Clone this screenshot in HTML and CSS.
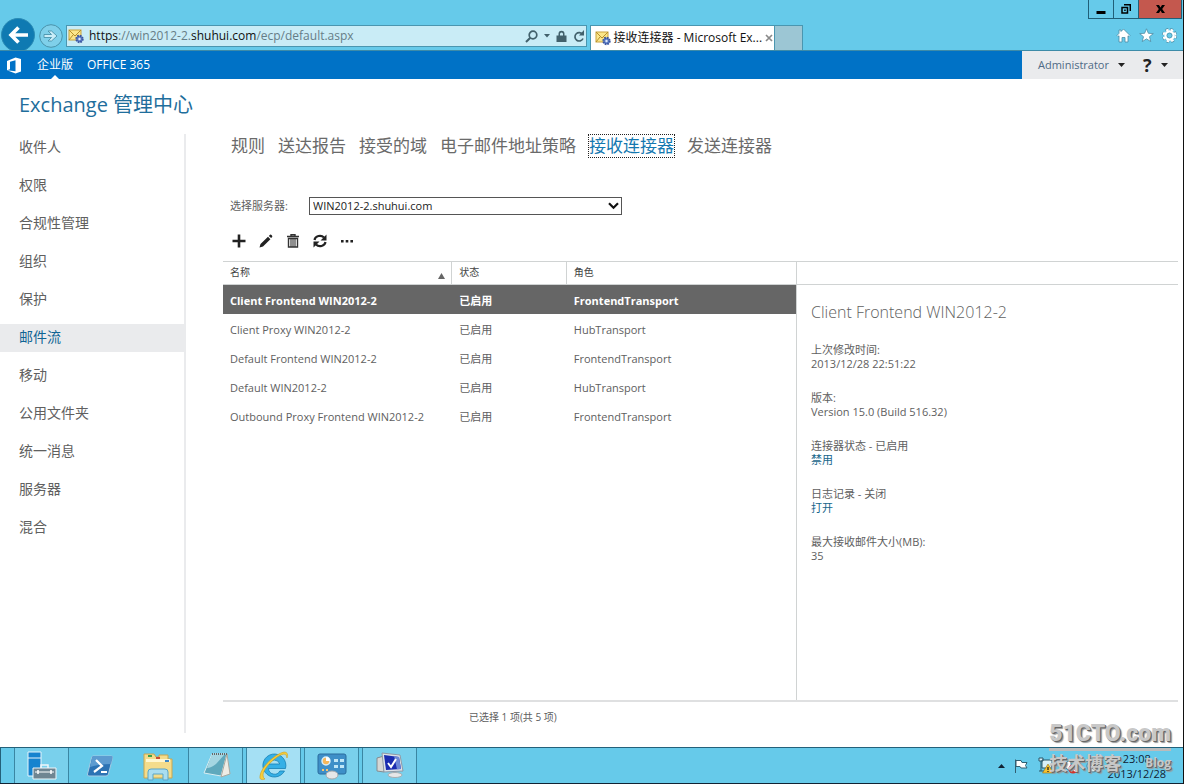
FILE: index.html
```html
<!DOCTYPE html>
<html lang="zh-CN">
<head>
<meta charset="utf-8">
<title>接收连接器 - Microsoft Exchange</title>
<link rel="stylesheet" href="styles.css">
</head>
<body>
<svg class="defs" width="0" height="0" aria-hidden="true">
  <defs>
    <symbol id="mail" viewBox="0 0 16 16">
      <rect x="1" y="2" width="12" height="10" fill="#fbe68a" stroke="#c9a23c"/>
      <path d="M1 2l6 6 6-6M1 12l4-5M13 12l-4-5" fill="none" stroke="#b88f2c"/>
      <circle cx="11.500" cy="11" r="3.200" fill="#5c7fc8" stroke="#3b559f" stroke-width="2" stroke-dasharray="1.600 .9"/>
      <circle cx="11.500" cy="11" r="1.200" fill="#dfe8fa"/>
    </symbol>
  </defs>
</svg>
<header class="chrome">
  <button class="back" aria-label="后退"><svg width="34" height="34" viewBox="0 0 34 34"><circle cx="17" cy="17" r="16.500" fill="#0f7ab2" stroke="#2b8bb5"/><path d="M27 17H10M17.500 9.500L10 17l7.500 7.500" fill="none" stroke="#fff" stroke-width="3.600"/></svg></button>
  <button class="forward" aria-label="前进"><svg width="24" height="24" viewBox="0 0 24 24"><circle cx="12" cy="12" r="11.300" fill="#7fd0ea" stroke="#4a93ab"/><path d="M5 10.500h7.500L9 7h3.500l5.500 5-5.500 5H9l3.500-3.500H5z" fill="#c9edf8" stroke="#4a93ab" stroke-width=".9"/></svg></button>
  <div class="address">
    <svg width="16" height="16"><use href="#mail"/></svg>
    <span class="url"><b>https</b>://win2012-2.<b>shuhui.com</b>/ecp/default.aspx</span>
    <button aria-label="搜索"><svg width="13" height="13" viewBox="0 0 13 13"><circle cx="8" cy="5" r="3.800" fill="none" stroke="#42616c" stroke-width="1.700"/><path d="M5.300 7.700L1 12" stroke="#42616c" stroke-width="2"/></svg></button>
    <button aria-label="下拉"><svg width="6" height="4" viewBox="0 0 6 4"><path d="M0 0h6L3 3.500z" fill="#42616c"/></svg></button>
    <button aria-label="安全"><svg width="11" height="13" viewBox="0 0 11 13"><path d="M.5 5.500h10V12H.5zM2.500 6V3.800a3 3 0 016 0V6" fill="#42616c"/><path d="M4 5.500V4a1.500 1.500 0 013 0v1.500z" fill="#c9ecf6"/></svg></button>
    <button aria-label="刷新"><svg width="12" height="13" viewBox="0 0 12 13"><path d="M9.700 4.500A4.200 4.200 0 1010 8.500" fill="none" stroke="#42616c" stroke-width="1.700"/><path d="M11 0v5.500H6z" fill="#42616c"/></svg></button>
  </div>
  <div class="browser-tab">
    <svg width="16" height="16"><use href="#mail"/></svg>
    <span>接收连接器 - Microsoft Ex...</span>
    <button aria-label="关闭标签"><svg width="8" height="8" viewBox="0 0 8 8"><path d="M1 1l6 6M7 1L1 7" stroke="#8a8a8a" stroke-width="1.700"/></svg></button>
  </div>
  <button class="new-tab" aria-label="新标签"></button>
  <div class="window-side">
    <div class="window-buttons">
      <button aria-label="最小化"><svg width="10" height="9" viewBox="0 0 10 9"><path d="M.5 6h9v3h-9z"/></svg></button>
      <button aria-label="还原"><svg width="10" height="10" viewBox="0 0 10 10"><path d="M1 3.500h5.500V9H1zM3 .7h6.300V7" fill="none" stroke="#000" stroke-width="1.500"/><path d="M3.200 5.500h1.500v1.500H3.200z"/></svg></button>
      <button class="close" aria-label="关闭"><svg width="9" height="8" viewBox="0 0 9 8"><path d="M0 0h3l1.500 2.400L6 0h3L6.200 4 9 8H6L4.500 5.600 3 8H0l2.800-4z"/></svg></button>
    </div>
    <div class="browser-tools">
      <button aria-label="主页"><svg width="15" height="15" viewBox="0 0 15 15"><path d="M7.500 1L14 7.500l-1 1-1-.7V14H9V9.500H6V14H3V7.800l-1 .7-1-1L3 5.300V2h2v1.500z" fill="#fff" stroke="#4c8ca3" stroke-width=".8"/></svg></button>
      <button aria-label="收藏夹"><svg width="15" height="15" viewBox="0 0 15 15"><path d="M7.500.8l1.900 4.500 4.900.3-3.800 3.100 1.300 4.900-4.300-2.700-4.300 2.700 1.300-4.900L.7 5.600l4.900-.3z" fill="#fff" stroke="#4c8ca3" stroke-width=".8"/></svg></button>
      <button aria-label="工具"><svg width="15" height="15" viewBox="0 0 15 15"><circle cx="7.500" cy="7.500" r="6" fill="none" stroke="#4c8ca3" stroke-width="3" stroke-dasharray="2.900 1.810"/><circle cx="7.500" cy="7.500" r="5.900" fill="none" stroke="#fff" stroke-width="2" stroke-dasharray="2.600 2.110"/><circle cx="7.500" cy="7.500" r="4" fill="none" stroke="#fff" stroke-width="2.400"/><circle cx="7.500" cy="7.500" r="2.500" fill="none" stroke="#4c8ca3" stroke-width=".7"/></svg></button>
    </div>
  </div>
</header>

<nav class="suite-bar">
  <svg class="office" width="17" height="17" viewBox="0 0 17 17"><path d="M1 4l8.500-3.500L15 2v12.500L9.500 16.500 1 13.300l8.500 1V3.300L4 4.700v7.500L1 13.300z" fill="#fff"/></svg>
  <a class="suite-link current" href="#">企业版</a>
  <a class="suite-link" href="#">OFFICE 365</a>
  <div class="account">
    <button class="user">Administrator <svg width="7" height="4" viewBox="0 0 7 4"><path d="M0 0h7L3.500 4z" fill="#222"/></svg></button>
    <button class="help"><span>?</span> <svg width="7" height="4" viewBox="0 0 7 4"><path d="M0 0h7L3.500 4z" fill="#222"/></svg></button>
  </div>
</nav>

<main class="page">
  <h1>Exchange 管理中心</h1>
  <div class="columns">
    <nav class="side">
      <a href="#">收件人</a><a href="#">权限</a><a href="#">合规性管理</a><a href="#">组织</a><a href="#">保护</a><a class="selected" href="#">邮件流</a><a href="#">移动</a><a href="#">公用文件夹</a><a href="#">统一消息</a><a href="#">服务器</a><a href="#">混合</a>
    </nav>
    <section class="content">
      <nav class="tabs">
        <a href="#">规则</a><a href="#">送达报告</a><a href="#">接受的域</a><a href="#">电子邮件地址策略</a><a class="active" href="#">接收连接器</a><a href="#">发送连接器</a>
      </nav>
      <div class="server">
        <label for="server">选择服务器:</label>
        <div class="select">
          <select id="server"><option>WIN2012-2.shuhui.com</option></select>
          <svg width="11" height="8" viewBox="0 0 11 8"><path d="M1 1.200l4.500 4.500L10 1.200" fill="none" stroke="#111" stroke-width="2.200"/></svg>
        </div>
      </div>
      <div class="toolbar">
        <button aria-label="新建"><svg width="16" height="16" viewBox="0 0 16 16"><path d="M8 1.500v13M1.500 8h13" stroke="#222" stroke-width="2.600"/></svg></button>
        <button aria-label="编辑"><svg width="16" height="16" viewBox="0 0 16 16"><path d="M1.500 14.500l1-3.500 7.500-7.200 2.400 2.500-7.400 7.200zM10.800 3l1.200-1.200q.8-.5 1.500.2l.6.7q.5.700 0 1.400l-1 1z" fill="#222"/></svg></button>
        <button aria-label="删除"><svg width="16" height="16" viewBox="0 0 16 16"><path d="M2 3.500h12M6 3V1.700h4V3M3.500 5.500h9V14h-9z" fill="none" stroke="#333" stroke-width="1.400"/><path d="M6 6v8M8 6v8M10 6v8" stroke="#333" stroke-width="1.100"/></svg></button>
        <button aria-label="刷新列表"><svg width="16" height="16" viewBox="0 0 16 16"><path d="M2.500 7A5.500 5 0 0112 4.500M13.500 9A5.500 5 0 014 11.500" fill="none" stroke="#222" stroke-width="2.200"/><path d="M14.500 1.500v6h-6zM1.500 14.500v-6h6z" fill="#222"/></svg></button>
        <button aria-label="更多"><svg width="16" height="16" viewBox="0 0 16 16"><path d="M2 7h2.600v2.400H2zM6.700 7h2.600v2.400H6.700zM11.400 7H14v2.400h-2.600z" fill="#222"/></svg></button>
      </div>
      <div class="panes">
        <div class="list">
          <table>
            <colgroup><col class="c-name"><col class="c-state"><col class="c-role"></colgroup>
            <thead><tr><th><span class="sort">名称 <svg width="7" height="6" viewBox="0 0 7 6"><path d="M0 6h7L3.500 0z" fill="#666"/></svg></span></th><th>状态</th><th>角色</th></tr></thead>
            <tbody>
              <tr class="picked"><td>Client Frontend WIN2012-2</td><td>已启用</td><td>FrontendTransport</td></tr>
              <tr><td>Client Proxy WIN2012-2</td><td>已启用</td><td>HubTransport</td></tr>
              <tr><td>Default Frontend WIN2012-2</td><td>已启用</td><td>FrontendTransport</td></tr>
              <tr><td>Default WIN2012-2</td><td>已启用</td><td>HubTransport</td></tr>
              <tr><td>Outbound Proxy Frontend WIN2012-2</td><td>已启用</td><td>FrontendTransport</td></tr>
            </tbody>
          </table>
        </div>
        <aside class="details">
          <div class="details-head"></div>
          <h2>Client Frontend WIN2012-2</h2>
          <p>上次修改时间:<br>2013/12/28 22:51:22</p>
          <p>版本:<br>Version 15.0 (Build 516.32)</p>
          <p>连接器状态 - 已启用<br><a href="#">禁用</a></p>
          <p>日志记录 - 关闭<br><a href="#">打开</a></p>
          <p>最大接收邮件大小(MB):<br>35</p>
        </aside>
      </div>
      <div class="status">已选择 1 项(共 5 项)</div>
    </section>
  </div>
</main>

<footer class="taskbar">
  <div class="tasks">
    <button class="open" aria-label="服务器管理器"><svg width="32" height="32" viewBox="0 0 32 32"><path d="M2 2h13v24H2z" fill="#1683cf" stroke="#e5f5fc"/><path d="M2 8h13" stroke="#e5f5fc"/><path d="M7 18h23v11H7z" fill="#6f8592" stroke="#eef6fa"/><path d="M15 18v-3h7v3" fill="none" stroke="#eef6fa" stroke-width="1.500"/><path d="M9 22h19" stroke="#fff"/><path d="M12 20v4M25 20v4" stroke="#fff" stroke-width="1.500"/></svg></button>
    <button aria-label="PowerShell"><svg width="30" height="28" viewBox="0 0 30 28"><path d="M8 4h18q2 0 1.500 2l-4 16q-.5 2-2.500 2H4q-2 0-1.500-2l4-16Q7 4 8 4z" fill="#2c73b4" stroke="#a5cce4"/><path d="M8 4h18q2 0 1.500 2l-1.500 6Q14 12 5 15L7 6q.3-2 1-2z" fill="#5c9bd0"/><path d="M11 8l6 6-8 6M16 20h6" fill="none" stroke="#fff" stroke-width="2.200"/></svg></button>
    <button aria-label="文件资源管理器"><svg width="32" height="30" viewBox="0 0 32 30"><path d="M2 3h10l2 3h3V4h9v4h4v19H2z" fill="#f4dc8b" stroke="#c9a64f"/><path d="M4 8h24v3H4z" fill="#fff7d0"/><path d="M6 4h4v2H6z" fill="#3ba04a"/><path d="M14 6h4v2h-4z" fill="#cb4b35"/><path d="M23 9h4v2h-4z" fill="#3e87c5"/><path d="M6 29v-8q0-3 3-3h14q3 0 3 3v8h-5v-6H11v6z" fill="#a9ddf0" stroke="#5aa5c7"/></svg></button>
    <button class="open" aria-label="记事本"><svg width="30" height="30" viewBox="0 0 30 30"><path d="M11 3h15l-6 22-17-3z" fill="#5fa9bd" stroke="#d9edf1"/><path d="M11 3h13l-9 10q-5 4-9 4z" fill="#a5d6e2"/><path d="M26 3l3 20-9 3z" fill="#eeece5" stroke="#aaa99f"/><path d="M11 3h15" stroke="#666" stroke-width="2" stroke-dasharray="1 1"/></svg></button>
    <button class="open current" aria-label="Internet Explorer"><svg width="32" height="32" viewBox="0 0 32 32"><path d="M21.800 21A6 6 0 0110.500 18.500H27.500A11.500 11.500 0 1026.500 21zM10.800 14A5.800 5.800 0 0121.800 14z" fill="#35b0e6" stroke="#1680b4" stroke-width=".8" fill-rule="evenodd"/><path d="M7 29q-6 2-5-3C3 17 17 4 26 2q5 0 3 6 0-4-3-4C19 5 5 18 5 25q0 3 2 4z" fill="#f7cf3a" stroke="#d09c1e" stroke-width=".6"/></svg></button>
    <button class="open" aria-label="控制面板"><svg width="32" height="32" viewBox="0 0 32 32"><rect x="2" y="4" width="28" height="20" rx="2" fill="#3e8fc8" stroke="#2a6c9e"/><circle cx="10" cy="11" r="4" fill="#f5b75b" stroke="#d6edf8" stroke-width="1.500"/><path d="M10 11V7a4 4 0 014 4z" fill="#fff"/><path d="M18 9h4v3h-4zM24 9h4v3h-4zM18 15h4v3h-4zM24 15h4v3h-4z" fill="#bfe6f7"/><path d="M6 19h2v2H6zM10 19h2v2h-2z" fill="#f6c571"/><ellipse cx="16" cy="25" rx="6" ry="4" fill="#e6e7e8" stroke="#a4a8aa"/></svg></button>
    <button class="open" aria-label="系统工具"><svg width="32" height="32" viewBox="0 0 32 32"><path d="M3 8l7-2v16l-7-1z" fill="#d6d7d5" stroke="#858b90"/><path d="M8 3l18 2 3 16-19 1z" fill="#dde2e8" stroke="#8f99a6"/><path d="M10 5l15 2 2 12-15 1z" fill="#1a2cb0"/><path d="M20 6l5 1 2 12-4 .3z" fill="#6c87d7"/><path d="M14 13l3 4 5-8" fill="none" stroke="#fff" stroke-width="2"/><ellipse cx="21" cy="25" rx="7" ry="2.500" fill="#e6e7e8" stroke="#a7adb1"/></svg></button>
  </div>
  <div class="tray">
    <svg width="7" height="4" viewBox="0 0 7 4"><path d="M0 4h7L3.500 0z" fill="#123"/></svg>
    <svg width="16" height="16" viewBox="0 0 16 16"><path d="M2.500 15V1.500M3 2.500h5l1 2h5l-1.500 3L14 10H8L7 8.500H3z" fill="#fff" stroke="#315f72"/></svg>
    <svg width="17" height="17" viewBox="0 0 17 17"><path d="M5 3h10v8H5zM2 1h4v3H2zM4 4v10M2 14h5" fill="#d8f0f8" stroke="#2b5668"/><path d="M11 7l5.500 9h-11z" fill="#f8c22d" stroke="#94701b" stroke-width=".6"/><path d="M11 10v3M11 14v1" stroke="#222" stroke-width="1.300"/></svg>
    <svg width="16" height="16" viewBox="0 0 16 16"><path d="M1 5h3l5-4v13l-5-4H1z" fill="#fff" stroke="#4c7485"/><circle cx="11" cy="11" r="4.500" fill="#d33328"/><path d="M9 9l4 4M13 9l-4 4" stroke="#fff" stroke-width="1.300"/></svg>
    <svg width="14" height="14" viewBox="0 0 14 14"><circle cx="7" cy="7" r="6" fill="#e3f5fb" stroke="#4c7485"/></svg>
    <time>23:08<br>2013/12/28</time>
  </div>
  <div class="watermark"><div class="wm-top">51CTO.com</div><div class="wm-bottom"><span>技术博客</span><small>Blog</small></div></div>
</footer>
</body>
</html>
```

FILE: styles.css
```css
* { box-sizing: border-box; }

body {
  margin: 0;
  min-height: 100vh;
  display: flex;
  flex-direction: column;
  background: #fff;
  border-right: 1px solid #111;
  color: #606060;
  font: 11px/14px "Open Sans", "Noto Sans CJK SC", sans-serif;
}

a { color: inherit; text-decoration: none; }
svg { display: block; flex: none; }
.defs { position: absolute; }

button {
  display: flex;
  align-items: center;
  justify-content: center;
  margin: 0;
  padding: 0;
  border: 0;
  background: none;
  color: inherit;
  font: inherit;
}

/* Browser frame */
.chrome {
  display: flex;
  align-items: flex-end;
  height: 51px;
  background: #66caea;
  border-bottom: 1px solid #3d8ba8;
  overflow: hidden;
}
.back { height: 32px; align-items: flex-start; margin-left: 1px; }
.forward { margin: 0 3px 2px 4px; }
.address {
  flex: 0 0 44%;
  display: flex;
  align-items: center;
  gap: 6px;
  height: 22px;
  margin-bottom: 3px;
  padding: 0 1px;
  background: #c9ecf6;
  border: 1px solid #4a96b0;
}
.url { flex: 1; margin-left: -1px; color: #667d86; font-size: 12px; white-space: nowrap; }
.url b { color: #111; font-weight: 400; }
.browser-tab {
  display: flex;
  align-items: center;
  gap: 3px;
  width: 185px;
  height: 25px;
  margin-left: 3px;
  padding: 0 5px 0 4px;
  background: #fff;
  border: 1px solid #4a96b0;
  border-bottom: 0;
  color: #111;
  font-size: 12px;
  white-space: nowrap;
}
.browser-tab span { flex: 1; }
.new-tab { width: 28px; height: 25px; background: #9cc6d4; border: 1px solid #4a96b0; border-left: 0; border-bottom: 0; }
.window-side { display: flex; flex-direction: column; justify-content: space-between; align-items: flex-end; height: 50px; margin-left: auto; }
.window-buttons { display: flex; border: 1px solid #205f78; border-top: 0; margin-right: 1px; }
.window-buttons button { width: 25px; height: 18px; border-right: 1px solid #205f78; }
.window-buttons .close { width: 42px; background: #c4584e; border-right: 0; }
.browser-tools { display: flex; gap: 8px; padding: 0 6px 7px 0; }

/* Suite bar */
.suite-bar { display: flex; align-items: center; height: 28px; background: #0072c6; color: #fff; font-size: 12px; }
.office { margin: 0 14px 0 6px; }
.suite-link { position: relative; display: flex; align-items: center; height: 28px; margin-right: 14px; }
.current.suite-link::after {
  content: "";
  position: absolute;
  left: 50%;
  bottom: 0;
  margin-left: -4px;
  border: 4px solid transparent;
  border-top: 0;
  border-bottom-color: #fff;
}
.account { display: flex; align-items: center; gap: 18px; width: 161px; height: 28px; margin-left: auto; padding-left: 16px; background: #eaebed; color: #4e6a85; font-size: 11px; }
.account button { gap: 9px; }
.help span { color: #222; font-size: 18px; font-weight: 700; }

/* Page */
.page { flex: 1; display: flex; flex-direction: column; }
h1 { margin: 12px 0 15px 19px; color: #1f6e9c; font-size: 20px; line-height: 28px; font-weight: 400; }
.columns { flex: 1; display: flex; }
.side { display: flex; flex-direction: column; gap: 10px; width: 186px; margin-bottom: 14px; border-right: 2px solid #eaebed; font-size: 14px; }
.side a { padding: 0 0 2px 19px; line-height: 26px; }
.side .selected { background: #eaebed; color: #0f6494; }
.content { flex: 1; display: flex; flex-direction: column; padding: 1px 5px 0 37px; }
.tabs { display: flex; gap: 13px; padding-left: 8px; color: #6a6a6a; font-size: 17px; line-height: 22px; white-space: nowrap; }
.tabs .active { color: #1478b0; outline: 1px dotted #222; }
.server { display: flex; align-items: center; margin-top: 40px; padding-left: 7px; }
.server label { width: 79px; }
.select { position: relative; width: 33%; }
.select select {
  display: block;
  width: 100%;
  height: 18px;
  padding: 0 3px;
  appearance: none;
  background: #fff;
  border: 1px solid #555;
  border-radius: 0;
  color: #222;
  font: inherit;
}
.select svg { position: absolute; top: 5px; right: 3px; pointer-events: none; }
.toolbar { display: flex; gap: 11px; padding: 18px 0 12px 8px; }
.panes { flex: 1; display: flex; border-top: 1px solid #d0d3d3; border-bottom: 2px solid #dfe0e1; }
.list { width: 60%; }
table { width: 100%; border-collapse: separate; border-spacing: 0; table-layout: fixed; }
.c-name { width: 40%; }
.c-state { width: 20%; }
th { height: 23px; padding: 0 7px 2px; border-right: 1px solid #d0d3d3; border-bottom: 1px solid #d0d3d3; color: #444; font-size: 10px; font-weight: 400; line-height: 14px; text-align: left; }
th:last-child { border-right: 0; }
.sort { display: flex; justify-content: space-between; align-items: flex-end; }
th:first-child { padding-right: 6px; }
td { height: 29px; padding: 3px 7px 0; white-space: nowrap; }
.picked td { background: #666; color: #fff; font-weight: 700; }
.details { flex: 1; border-left: 1px solid #d0d3d3; padding-left: 14px; }
.details-head { height: 23px; margin-left: -14px; border-bottom: 1px solid #d0d3d3; }
h2 { margin: 15px 0 19px; font-size: 16px; line-height: 24px; font-weight: 300; }
.details p { margin: 0 0 20px; }
.details a { color: #17658a; }
.status { height: 45px; padding: 8px 0 0 246px; font-size: 10px; line-height: 14px; }

/* Taskbar */
.taskbar { position: relative; display: flex; justify-content: space-between; height: 37px; background: #66caea; border-top: 1px solid #24617a; border-bottom: 1px solid #123; }
.tasks { display: flex; gap: 3px; padding-left: 13px; border-left: 1px solid #24617a; }
.tasks button { width: 55px; border: 0 solid #3a86a3; }
.tasks .open { background: #79d0ec; border-width: 0 1px; }
.tasks .current { background: #a5e0f4; }
.tray { display: flex; align-items: center; gap: 8px; padding-right: 17px; color: #123; font-size: 11px; line-height: 15px; }
.tray time { text-align: center; }
.watermark { position: absolute; right: 12px; bottom: 8px; color: #c8c8c8; text-shadow: 1px 1px 0 #666, 2px 2px 1px #999; font-weight: 700; }
.wm-top { font: 900 23px/28px Roboto, sans-serif; border-bottom: 3px solid #bbb; }
.wm-bottom { display: flex; align-items: center; justify-content: space-between; gap: 14px; font-size: 18px; line-height: 24px; }
.wm-bottom small { font-size: 12px; }
```
